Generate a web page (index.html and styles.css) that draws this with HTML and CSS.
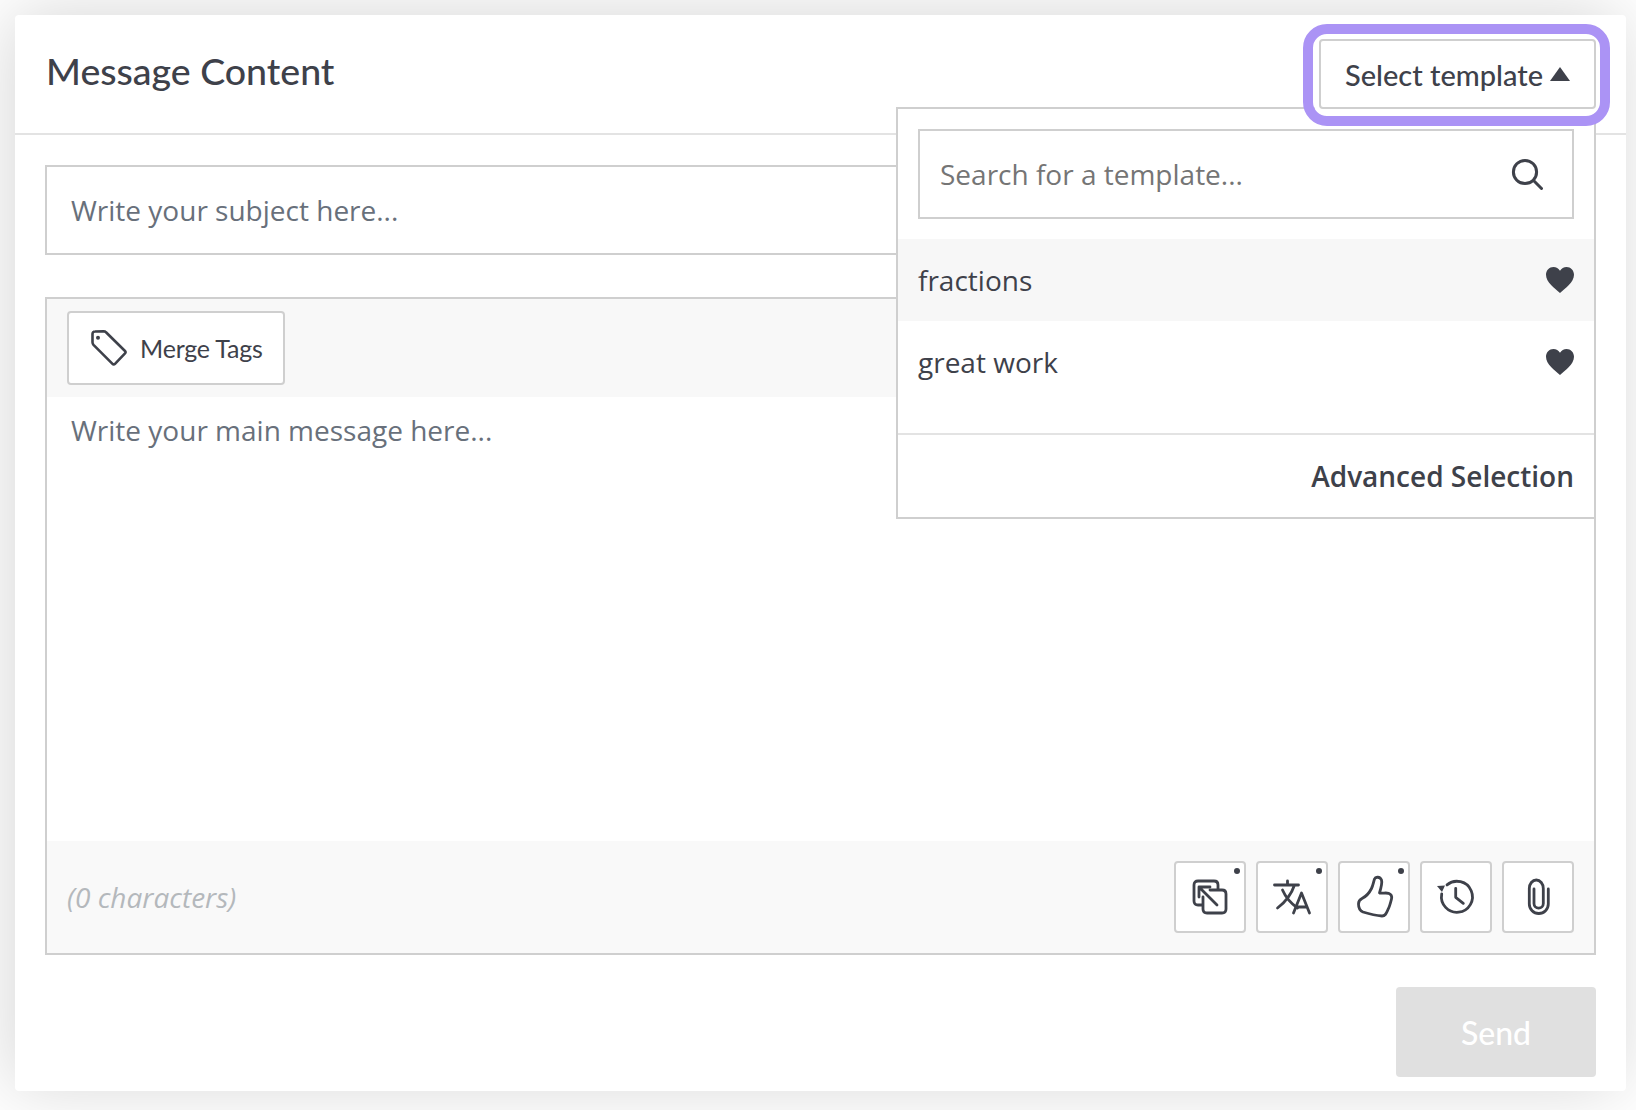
FILE: index.html
```html
<!DOCTYPE html>
<html lang="en">
<head>
<meta charset="utf-8">
<title>Message Content</title>
<link rel="stylesheet" href="styles.css">
</head>
<body>
<main class="card">
  <header class="card-head">
    <h1 class="title">Message Content</h1>
    <div class="picker">
      <button class="picker-btn" type="button">Select template
        <svg class="caret" viewBox="0 0 20 14"><path d="M10 0 20 14H0z"/></svg>
      </button>
      <div class="menu">
        <div class="menu-search">
          <span class="ph-menu">Search for a template...</span>
          <svg class="search-icon" viewBox="0 0 32 32"><circle cx="14" cy="14" r="11.600"/><path d="M22.800 22.800 30.500 30.500"/></svg>
        </div>
        <ul class="menu-list">
          <li class="menu-item is-hover">fractions
            <svg class="heart" viewBox="0 0 28 26"><path d="M14 26C9 21.500 0 15.500 0 7.800 0 3.300 3.400 0 7.400 0 10.200 0 12.600 1.400 14 3.700 15.400 1.400 17.800 0 20.600 0 24.600 0 28 3.300 28 7.800 28 15.500 19 21.500 14 26z"/></svg>
          </li>
          <li class="menu-item">great work
            <svg class="heart" viewBox="0 0 28 26"><path d="M14 26C9 21.500 0 15.500 0 7.800 0 3.300 3.400 0 7.400 0 10.200 0 12.600 1.400 14 3.700 15.400 1.400 17.800 0 20.600 0 24.600 0 28 3.300 28 7.800 28 15.500 19 21.500 14 26z"/></svg>
          </li>
        </ul>
        <div class="menu-foot">Advanced Selection</div>
      </div>
    </div>
  </header>
  <section class="card-body">
    <div class="subject">Write your subject here...</div>
    <div class="editor">
      <div class="toolbar">
        <button class="merge" type="button">
          <svg class="tag" viewBox="0 0 36 36"><path d="M1.500 4C1.500 2.500 2.500 1.500 4 1.500L12.500 1.300C13.500 1.300 14.300 1.500 15 2.300L34 21C34.800 21.800 34.800 22.600 34 23.400L24 33.800C23.200 34.600 22.200 34.600 21.500 33.800L2.500 14.800C1.800 14 1.500 13.200 1.500 12.200z"/><circle class="tag-dot" cx="7" cy="7.700" r="2"/></svg>
          <span>Merge Tags</span>
        </button>
      </div>
      <div class="editor-body">Write your main message here...</div>
      <div class="editor-foot">
        <span class="count">(0 characters)</span>
        <div class="tools">
          <button class="tool has-dot" type="button">
            <svg viewBox="-1 -1 36 36"><path d="M9 25H5C2.500 25 1 23.500 1 21V5C1 2.500 2.500 1 5 1H21C23.500 1 25 2.500 25 5V9"/><path d="M17 10H29C31.500 10 33 11.500 33 14V29C33 31.500 31.500 33 29 33H14C11.500 33 10 31.500 10 29V17"/><path d="M24 25 6 7M6 17V7H17"/></svg>
          </button>
          <button class="tool has-dot" type="button">
            <svg viewBox="-.5 0 36 36"><path d="M0 6H24M13 2V6M20 6C17 15 11 23 3 29M8 11C11 18 16 24 23 29"/><path d="M19 34 27 14 35 34M22 28H32"/></svg>
          </button>
          <button class="tool has-dot" type="button">
            <svg viewBox="0 0 36 36"><path d="M2.500 25C2.500 22 4 20.500 6 19.500 10 17.500 13.500 13.500 15.500 9.500 17 6.500 17.500 3 18.500 0 19.500-2.500 24-2.500 25.500 1 26.500 4 25 9 23.500 14 27 14.500 30 13.500 32.500 14.300 35.500 15.500 36 18 35.500 20 34.500 24 33.500 28 32 30.500 30.500 34 29.500 37 26 37 20 36.500 12 34.500 7 33 3.500 31.500 2.500 29 2.500 25z"/></svg>
          </button>
          <button class="tool" type="button">
            <svg viewBox="1 0 36 36"><path d="M10 5.900A15.500 15.500 0 1 1 4.700 15"/><path class="fill" d="M0 7 8 6.500 5 13z"/><path d="M18.700 9.300V18.300L26.300 24.300"/></svg>
          </button>
          <button class="tool" type="button">
            <svg viewBox="0 0 36 36"><path d="M28.300 10V25A9.500 9.500 0 0 1 9.300 25V9.500A7 8.500 0 0 1 23.300 9.500V24.500A4.650 4.650 0 0 1 14 24.500V10"/></svg>
          </button>
        </div>
      </div>
    </div>
    <div class="actions">
      <button class="send" type="button">Send</button>
    </div>
  </section>
</main>
</body>
</html>
```
FILE: styles.css
```css
* { box-sizing: border-box; }
html, body { margin: 0; height: 100%; }
body {
  background: #fff;
  padding: 15px 10px 19px 15px;
  font-family: "Open Sans", "Liberation Sans", sans-serif;
  color: #3e414a;
}
button { font: inherit; color: inherit; background: #fff; cursor: pointer; }

.card {
  height: 1076px;
  background: #fff;
  border-radius: 4px;
  box-shadow: -5px -3px 70px rgba(0, 0, 0, .16);
  display: flex;
  flex-direction: column;
}
.card-head {
  height: 120px;
  flex: none;
  border-bottom: 2px solid #e3e3e3;
  display: flex;
  align-items: flex-start;
  justify-content: space-between;
  padding: 24px 30px 0 31px;
}
.title {
  margin: 3px 0 0;
  font-family: Lato, "Liberation Sans", sans-serif;
  font-weight: 500;
  font-size: 37.500px;
  line-height: 58px;
}
.picker { position: relative; }
.picker-btn {
  position: relative;
  z-index: 2;
  width: 277px;
  height: 70px;
  border: 2px solid #cfcfcf;
  border-radius: 4px;
  font-family: Lato, "Liberation Sans", sans-serif;
  font-size: 29px;
  font-weight: 500;
  display: flex;
  align-items: center;
  justify-content: space-between;
  padding: 0 24px;
  box-shadow: 0 0 0 5px #fff;
}
.picker-btn::after {
  content: "";
  position: absolute;
  top: -17px;
  right: -16px;
  bottom: -19px;
  left: -18px;
  border: 10px solid #ab93f5;
  border-radius: 24px;
  pointer-events: none;
}
.caret { width: 20px; height: 14px; fill: #3e414a; }
.menu {
  position: absolute;
  z-index: 1;
  top: 68px;
  right: 0;
  width: 700px;
  height: 412px;
  background: #fff;
  border: 2px solid #cfcfcf;
  display: flex;
  flex-direction: column;
}
.menu-search {
  margin: 20px;
  height: 90px;
  flex: none;
  border: 2px solid #cfcfcf;
  display: flex;
  align-items: center;
  justify-content: space-between;
  padding: 0 29px 0 20px;
  font-size: 28px;
  color: #757575;
}
.search-icon { width: 32px; height: 32px; fill: none; stroke: #3e414a; stroke-width: 3; stroke-linecap: round; }
.menu-list { list-style: none; margin: 0; padding: 0; flex: 1; }
.menu-item {
  height: 82px;
  display: flex;
  align-items: center;
  justify-content: space-between;
  padding: 0 20px;
  font-size: 28px;
}
.menu-item.is-hover { background: #f7f7f7; }
.heart { width: 28px; height: 26px; fill: #3e414a; }
.menu-foot {
  height: 84px;
  flex: none;
  border-top: 2px solid #e3e3e3;
  display: flex;
  align-items: center;
  justify-content: flex-end;
  padding: 0 20px;
  font-size: 28px;
  font-weight: 600;
}

.card-body {
  flex: 1;
  display: flex;
  flex-direction: column;
  padding: 30px 30px 14px;
}
.subject {
  height: 90px;
  flex: none;
  border: 2px solid #cfcfcf;
  display: flex;
  align-items: center;
  padding: 0 24px;
  font-size: 28px;
  color: #68707b;
}
.editor {
  margin-top: 42px;
  height: 658px;
  flex: none;
  border: 2px solid #cfcfcf;
  display: flex;
  flex-direction: column;
}
.toolbar {
  height: 98px;
  flex: none;
  background: #f8f8f8;
  padding: 12px 20px;
}
.merge {
  width: 218px;
  height: 74px;
  border: 2px solid #cfcfcf;
  border-radius: 4px;
  font-family: Lato, "Liberation Sans", sans-serif;
  font-size: 25px;
  letter-spacing: -.2px;
  white-space: nowrap;
  display: flex;
  align-items: center;
  gap: 13px;
  padding: 0 22px;
}
.tag { width: 36px; height: 36px; flex: none; fill: none; stroke: #3e414a; stroke-width: 2.600; stroke-linejoin: round; }
.tag-dot { fill: #3e414a; stroke: none; }
.editor-body {
  flex: 1;
  padding: 13px 24px;
  font-size: 28px;
  line-height: 40px;
  color: #68707b;
}
.editor-foot {
  height: 112px;
  flex: none;
  background: #f9f9f9;
  display: flex;
  align-items: center;
  justify-content: space-between;
  padding: 0 20px;
}
.count { font-size: 28px; font-style: italic; color: #b4b8bc; }
.tools { display: flex; gap: 10px; }
.tool {
  position: relative;
  width: 72px;
  height: 72px;
  padding: 0;
  border: 2px solid #cfcfcf;
  border-radius: 4px;
  display: flex;
  align-items: center;
  justify-content: center;
}
.tool svg { width: 36px; height: 36px; fill: none; overflow: visible; stroke: #3e414a; stroke-width: 2.800; stroke-linecap: round; stroke-linejoin: round; }
.tool svg .fill { fill: #3e414a; stroke: none; }
.has-dot::after {
  content: "";
  position: absolute;
  top: 5px;
  right: 4px;
  width: 6px;
  height: 6px;
  border-radius: 50%;
  background: #3e414a;
}
.actions { margin-top: 32px; display: flex; justify-content: flex-end; }
.send {
  width: 200px;
  height: 90px;
  border: 0;
  border-radius: 4px;
  background: #e0e0e0;
  color: #fff;
  font-family: Lato, "Liberation Sans", sans-serif;
  font-size: 32px;
  font-weight: 500;
}
```
